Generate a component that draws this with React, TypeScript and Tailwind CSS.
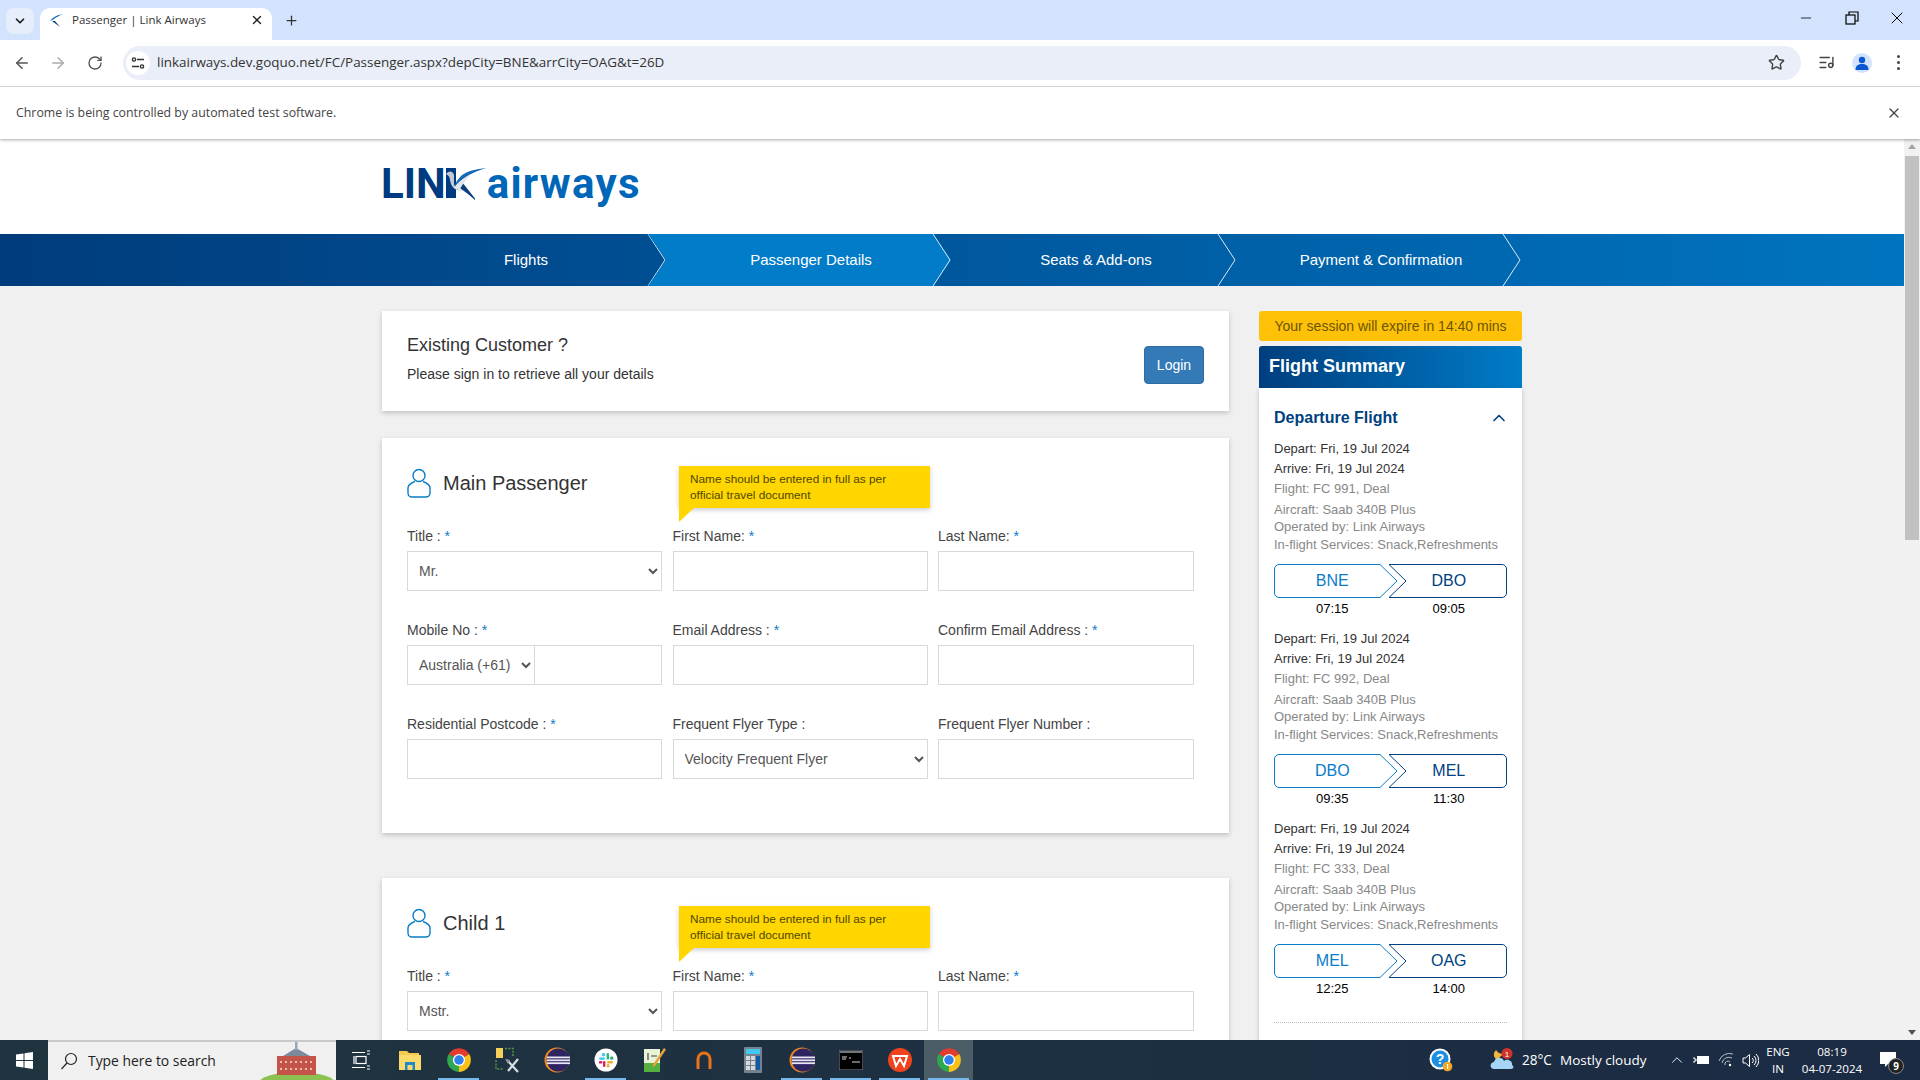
import { ArrowLeft, ArrowRight, ChevronDown, ChevronUp, ListMusic, Minus, Plus, RotateCw, Star, X } from "lucide-react";

const segments = [
  { flight: "FC 991", from: "BNE", to: "DBO", dep: "07:15", arr: "09:05" },
  { flight: "FC 992", from: "DBO", to: "MEL", dep: "09:35", arr: "11:30" },
  { flight: "FC 333", from: "MEL", to: "OAG", dep: "12:25", arr: "14:00" },
];

const steps = ["Flights", "Passenger Details", "Seats & Add-ons", "Payment & Confirmation"];

function Bird({ className }: { className?: string }) {
  return (
    <svg viewBox="0 0 41 33" className={className}>
      <rect x="0" y="1" width="10" height="30" fill="#003a80" />
      <path d="M29 31.5 L16 15 L11 19 L22 27 L29 33Z" fill="#0d3f7c" />
      <path d="M40.5 1 C30 2 21 4 15 9 C11 13 9 17 8 21 C14 13 25 5 40.5 1Z" fill="#1368b5" />
      <path d="M0 7 C3 3 7 4 8 8 L8 17 C9 21 13 23 17 23 C11 25 5 21 4 13 C4 10 2 8 0 7Z" fill="#c3cad4" />
      <path d="M8 21 C13 14 18 11 25 7 C20 13 16 18 14 22Z" fill="#e3e7ec" />
    </svg>
  );
}

function ChromeLogo({ size = 24 }: { size?: number }) {
  return (
    <svg width={size} height={size} viewBox="0 0 24 24">
      <path d="M12 12 L2.5 6.5 A11 11 0 0 1 21.5 6.5Z" fill="#e33b2e" />
      <path d="M12 12 L21.5 6.5 A11 11 0 0 1 12 23Z" fill="#fbc116" />
      <path d="M12 12 L12 23 A11 11 0 0 1 2.5 6.5Z" fill="#2fa84f" />
      <circle cx="12" cy="12" r="5.6" fill="#fff" />
      <circle cx="12" cy="12" r="4.4" fill="#2f80ed" />
    </svg>
  );
}

function EclipseLogo() {
  return (
    <svg width="26" height="26" viewBox="0 0 26 26">
      <circle cx="13" cy="13" r="12.5" fill="#f28c1e" />
      <circle cx="14.2" cy="13" r="11.5" fill="#2f2462" />
      <rect x="3" y="9.5" width="23" height="1.8" fill="#e8e6f2" />
      <rect x="3" y="12.4" width="23" height="1.8" fill="#e8e6f2" />
      <rect x="3" y="15.3" width="23" height="1.8" fill="#e8e6f2" />
    </svg>
  );
}

const taskIcons = [
  {
    key: "taskview",
    node: (
      <svg width="18" height="20" viewBox="0 0 18 20" fill="none" stroke="#fff" strokeWidth="1.2">
        <path d="M0 2.5 H13 M15 1 H18 M15 4 H18" />
        <rect x="4" y="6.5" width="10" height="7" />
        <path d="M0 17.5 H13 M15 16 H18 M15 19 H18 M2 6 V14" />
      </svg>
    ),
  },
  {
    key: "folder",
    node: (
      <svg width="24" height="24" viewBox="0 0 24 24">
        <path d="M1 3 H9 L11 5 H21 V22 H1Z" fill="#f5c94e" />
        <rect x="1" y="7" width="22" height="15" fill="#fbd96b" />
        <path d="M7 22 V14 H17 V22 H14.5 V17 H9.5 V22Z" fill="#1e88c9" />
      </svg>
    ),
  },
  { key: "chrome1", bar: true, node: <ChromeLogo size={26} /> },
  {
    key: "tools",
    node: (
      <svg width="26" height="26" viewBox="0 0 26 26" fill="none">
        <rect x="1" y="1" width="7" height="10" fill="#f5cf5a" />
        <path d="M10 1.5 H18 V10 M1 13 V22 H8" stroke="#5a9a3a" strokeWidth="1.4" strokeDasharray="2 1.4" />
        <path d="M12 13 L23 25 M23 12 L13 24" stroke="#d9dde0" strokeWidth="2.2" />
        <path d="M10 12 L15 13 L13 17Z" fill="#8a939a" />
      </svg>
    ),
  },
  { key: "eclipse1", node: <EclipseLogo /> },
  {
    key: "slack",
    bar: true,
    node: (
      <svg width="24" height="24" viewBox="0 0 24 24">
        <circle cx="12" cy="12" r="11.5" fill="#fff" />
        <rect x="8" y="5" width="3" height="3.4" rx="1.4" fill="#36c5f0" />
        <rect x="5" y="9.4" width="6" height="2.4" rx="1.2" fill="#36c5f0" />
        <rect x="12.6" y="5" width="2.4" height="6.6" rx="1.2" fill="#2eb67d" />
        <rect x="16" y="8.6" width="3.4" height="3.2" rx="1.4" fill="#2eb67d" />
        <rect x="13" y="13" width="6" height="2.4" rx="1.2" fill="#ecb22e" />
        <rect x="12.8" y="16" width="2.6" height="3.4" rx="1.2" fill="#ecb22e" />
        <rect x="9" y="13" width="2.4" height="6" rx="1.2" fill="#e01e5a" />
        <rect x="5" y="13" width="3.4" height="2.6" rx="1.2" fill="#e01e5a" />
      </svg>
    ),
  },
  {
    key: "notepad",
    node: (
      <svg width="24" height="26" viewBox="0 0 24 26">
        <path d="M1 2 H17 V25 H1Z" fill="#e8f3d8" />
        <path d="M1 16 H17 V25 H1Z" fill="#55b13f" />
        <path d="M5 6 V13 M8 9 H14" stroke="#444" strokeWidth="1.2" />
        <path d="M21 1 L23 2.5 L12 19 L9.5 20 L10 17.5Z" fill="#e9a13a" />
      </svg>
    ),
  },
  {
    key: "arch",
    node: (
      <svg width="18" height="20" viewBox="0 0 18 20" fill="none">
        <path d="M3 19 V9 A6 6 0 0 1 15 9 V19" stroke="#e8731a" strokeWidth="3" />
      </svg>
    ),
  },
  {
    key: "calc",
    node: (
      <svg width="18" height="26" viewBox="0 0 18 26">
        <rect width="18" height="26" rx="1" fill="#76828c" />
        <rect x="2" y="2" width="14" height="5" fill="#43c6ef" />
        {[9, 14, 19].map((y) => [2, 7].map((x) => <rect key={`${x}-${y}`} x={x} y={y} width="4" height="4" fill="#d6dade" />))}
        <rect x="12" y="9" width="4" height="14" fill="#0f5ba7" />
      </svg>
    ),
  },
  { key: "eclipse2", bar: true, node: <EclipseLogo /> },
  {
    key: "cmd",
    bar: true,
    node: (
      <svg width="24" height="20" viewBox="0 0 24 20">
        <rect width="24" height="20" fill="#000" stroke="#8a8f94" />
        <rect x="1" y="1" width="22" height="2" fill="#6f767c" />
        <path d="M3 7 H8 M3 9 H7 M10 8 H12 M13 12 H21" stroke="#d5d5d5" strokeWidth="1.2" />
      </svg>
    ),
  },
  {
    key: "wps",
    bar: true,
    node: (
      <svg width="24" height="24" viewBox="0 0 24 24" fill="none">
        <circle cx="12" cy="12" r="12" fill="#f0431c" />
        <path d="M5 8 H19 L16 18 L12 11 L8 18Z" stroke="#fff" strokeWidth="2" />
      </svg>
    ),
  },
  { key: "chrome2", bar: true, active: true, node: <ChromeLogo size={26} /> },
];

function PersonIcon() {
  return (
    <svg width="24" height="30" viewBox="0 0 24 30" fill="none" stroke="#0a7cc9" strokeWidth="1.4">
      <circle cx="12" cy="7.5" r="6" />
      <path d="M8 13.500 C4 15 1 17 1 20 V25 C1 27.500 3 29 5 29 H19 C21 29 23 27.500 23 25 V20 C23 17 20 15 16 13.500" />
    </svg>
  );
}

function Label({ text, required = true }: { text: string; required?: boolean }) {
  return (
    <div className="mb-[5px] h-5 text-[14px] leading-5 text-[#444]">
      {text}
      {required && <span className="text-[#0a7cc9]"> *</span>}
    </div>
  );
}

const boxClass = "h-[40px] border border-[#d9d9d9] bg-white text-[14px] text-[#555] outline-none";

function TextField({ label, required }: { label: string; required?: boolean }) {
  return (
    <div className="mb-[29px]">
      <Label text={label} required={required} />
      <input className={`${boxClass} w-full`} />
    </div>
  );
}

function SelectField({ label, value, required }: { label: string; value: string; required?: boolean }) {
  return (
    <div className="mb-[29px]">
      <Label text={label} required={required} />
      <select className={`${boxClass} w-full pl-[7px]`} defaultValue={value}>
        <option>{value}</option>
      </select>
    </div>
  );
}

function PassengerHead({ title }: { title: string }) {
  return (
    <div className="relative flex h-[58px] items-start gap-[12px]">
      <PersonIcon />
      <div className="text-[20px] leading-[30px] text-[#333]">{title}</div>
      <div className="absolute left-[272px] top-[-2px] w-[251px] bg-[#ffd600] px-[11px] py-[5px] text-[11.8px] leading-4 text-[#4f4700] shadow-[0_2px_5px_rgba(0,0,0,0.2)]">
        Name should be entered in full as per
        <br />
        official travel document
        <span className="absolute left-0 top-full h-[14px] w-[15px] bg-[#ffd600] [clip-path:polygon(0_0,100%_0,0_100%)]" />
      </div>
    </div>
  );
}

function Route({ from, to, dep, arr }: { from: string; to: string; dep: string; arr: string }) {
  return (
    <div className="mt-[10px]">
      <div className="relative grid h-[34px] grid-cols-2 text-center text-[16px] leading-[34px]">
        <svg className="absolute inset-0" width="233" height="34" viewBox="0 0 233 34" fill="none">
          <path d="M5 .5 H106 L123 17 L106 33.5 H5 A4.5 4.5 0 0 1 .5 29 V5 A4.5 4.5 0 0 1 5 .5Z" stroke="#0a7cc9" />
          <path d="M115 .5 H228 A4.5 4.5 0 0 1 232.5 5 V29 A4.5 4.5 0 0 1 228 33.5 H115 L132 17Z" stroke="#00417f" />
        </svg>
        <div className="text-[#0a7cc9]">{from}</div>
        <div className="text-[#00417f]">{to}</div>
      </div>
      <div className="grid grid-cols-2 pt-[1px] text-center text-[13px] leading-5 text-black">
        <div>{dep}</div>
        <div>{arr}</div>
      </div>
    </div>
  );
}

export default function App() {
  return (
    <div className="flex h-[1080px] w-[1920px] flex-col overflow-hidden bg-white font-['Liberation_Sans',Arial,sans-serif]">
      {/* browser tabs */}
      <div className="flex h-[40px] items-end bg-[#d3e3fd] font-['Open_Sans',sans-serif]">
        <div className="mb-[6px] ml-[6px] flex h-[26px] w-[28px] items-center justify-center rounded-[8px] bg-[#e6eefc]">
          <ChevronDown size={14} strokeWidth={3} className="text-[#1f1f1f]" />
        </div>
        <div className="ml-[6px] flex h-[32px] w-[232px] items-center rounded-t-[10px] bg-white pb-[8px] pl-[9px] pr-[8px]">
          <svg width="15" height="15" viewBox="0 0 15 15">
            <path d="M14 1 C8 2 3 5 1 8 C4 7 7 4 14 1Z" fill="#1368b5" />
            <path d="M3 8 L11 14 L6 8Z" fill="#0d3f7c" />
          </svg>
          <span className="ml-[8px] flex-1 text-[11.5px] text-[#333]">Passenger | Link Airways</span>
          <X size={14} strokeWidth={2.4} className="text-[#222]" />
        </div>
        <Plus size={15} strokeWidth={2} className="mb-[12px] ml-[12px] text-[#333]" />
        <div className="mb-[12px] ml-auto flex items-center text-black">
          <Minus size={16} strokeWidth={1.2} className="mr-[30px]" />
          <svg width="16" height="16" viewBox="0 0 16 16" fill="none" stroke="#000" strokeWidth="1.2" className="mr-[27px]">
            <rect x="2" y="5" width="9" height="9" />
            <path d="M5 5 V2 H14 V11 H11" />
          </svg>
          <X size={20} strokeWidth={1.2} className="mr-[13px]" />
        </div>
      </div>
      {/* toolbar */}
      <div className="flex h-[47px] items-center border-b border-[#e0e0e0] bg-white pb-[1px] font-['Open_Sans',sans-serif]">
        <ArrowLeft size={18} className="ml-[13px] text-[#555]" />
        <ArrowRight size={18} className="ml-[18px] text-[#aaa]" />
        <RotateCw size={16} className="ml-[20px] text-[#555]" />
        <div className="ml-[20px] flex h-[34px] w-[1678px] items-center rounded-full bg-[#e9eef8] pl-[3px] pr-[16px]">
          <div className="flex h-[24px] w-[24px] items-center justify-center rounded-full bg-white">
            <svg width="14" height="14" viewBox="0 0 14 14" fill="none" stroke="#333" strokeWidth="1.4">
              <path d="M6 3.5 H13 M1 10.5 H8" />
              <circle cx="3" cy="3.5" r="1.6" />
              <circle cx="11" cy="10.5" r="1.6" />
            </svg>
          </div>
          <span className="ml-[7px] flex-1 text-[13.43px] text-[#333]">linkairways.dev.goquo.net/FC/Passenger.aspx?depCity=BNE&amp;arrCity=OAG&amp;t=26D</span>
          <Star size={17} strokeWidth={2} className="text-[#444]" />
        </div>
        <ListMusic size={17} strokeWidth={2} className="ml-[17px] text-[#444]" />
        <div className="ml-[17px] flex h-[20px] w-[20px] items-center justify-center overflow-hidden rounded-full bg-[#d3e3fd]">
          <svg width="14" height="14" viewBox="0 0 14 14" fill="#0b57d0">
            <circle cx="7" cy="4" r="3.2" />
            <path d="M0.5 14 C0.5 9.5 3.5 8 7 8 C10.5 8 13.5 9.5 13.5 14Z" />
          </svg>
        </div>
        <div className="ml-[25px] flex flex-col gap-[3px]">
          <span className="h-[3px] w-[3px] rounded-full bg-[#444]" />
          <span className="h-[3px] w-[3px] rounded-full bg-[#444]" />
          <span className="h-[3px] w-[3px] rounded-full bg-[#444]" />
        </div>
      </div>
      {/* automation infobar */}
      <div className="z-10 flex h-[52px] items-center justify-between bg-white pl-[16px] pr-[18px] font-['Open_Sans',sans-serif] text-[12.35px] text-[#444] shadow-[0_1px_3px_rgba(0,0,0,0.35)]">
        <span>Chrome is being controlled by automated test software.</span>
        <X size={16} strokeWidth={1.8} className="text-[#444]" />
      </div>

      {/* page viewport */}
      <div className="flex h-[901px]">
        <div className="w-[1904px] overflow-hidden bg-[#f0f0f0]">
          <div className="h-[95px] bg-white pl-[381px] pt-[24px]">
            <div className="flex items-baseline font-['Roboto',sans-serif] font-bold leading-[42px]">
              <span className="text-[42px] text-[#003a80]">LIN</span>
              <Bird className="mt-[4px] h-[33px] w-[41px] self-start" />
              <span className="text-[42px] tracking-[1.3px] text-[#0066b8]">airways</span>
            </div>
          </div>
          <div className="flex h-[52px] bg-gradient-to-r from-[#003c7c] to-[#0074c0] pl-[381px] text-[15px] text-white">
            {steps.map((step, i) => (
              <div key={step} className="relative flex h-full w-[285px] items-center justify-center pl-[5px]">
                {i === 1 && (
                  <div className="absolute left-[-18px] top-0 h-full w-[303px] bg-[#007cc8] [clip-path:polygon(0_0,285px_0,303px_50%,285px_100%,0_100%,18px_50%)]" />
                )}
                <svg className="absolute right-[-1px] top-0" width="20" height="52" viewBox="0 0 20 52" fill="none" stroke="#dbe8f3" strokeWidth="1">
                  <path d="M1 0 L18 26 L1 52" />
                </svg>
                <span className="relative">{step}</span>
              </div>
            ))}
          </div>

          <div className="flex gap-[30px] pl-[382px] pt-[25px]">
            <div className="w-[847px]">
              <div className="flex h-[100px] items-center justify-between bg-white px-[25px] shadow-[0_2px_5px_rgba(0,0,0,0.2)]">
                <div className="mb-[6px]">
                  <div className="text-[18px] leading-[26px] text-[#333]">Existing Customer ?</div>
                  <div className="mt-[6px] text-[14px] leading-5 text-[#333]">Please sign in to retrieve all your details</div>
                </div>
                <button className="mt-[8px] h-[38px] w-[60px] rounded-[4px] border border-[#2e6da4] bg-[#337ab7] text-[14px] text-white">Login</button>
              </div>

              <div className="mt-[27px] h-[395px] bg-white pl-[25px] pt-[30px] shadow-[0_2px_5px_rgba(0,0,0,0.2)]">
                <PassengerHead title="Main Passenger" />
                <div className="grid grid-cols-[255px_255px_256px] gap-x-[10.5px]">
                  <SelectField label="Title :" value="Mr." />
                  <TextField label="First Name:" />
                  <TextField label="Last Name:" />
                  <div className="mb-[29px]">
                    <Label text="Mobile No :" />
                    <div className="flex">
                      <select className={`${boxClass} w-[128px] shrink-0 pl-[7px]`} defaultValue="Australia (+61)">
                        <option>Australia (+61)</option>
                      </select>
                      <input className={`${boxClass} w-[127px] border-l-0`} />
                    </div>
                  </div>
                  <TextField label="Email Address :" />
                  <TextField label="Confirm Email Address :" />
                  <TextField label="Residential Postcode :" />
                  <SelectField label="Frequent Flyer Type :" value="Velocity Frequent Flyer" required={false} />
                  <TextField label="Frequent Flyer Number :" required={false} />
                </div>
              </div>

              <div className="mt-[45px] h-[395px] bg-white pl-[25px] pt-[30px] shadow-[0_2px_5px_rgba(0,0,0,0.2)]">
                <PassengerHead title="Child 1" />
                <div className="grid grid-cols-[255px_255px_256px] gap-x-[10.5px]">
                  <SelectField label="Title :" value="Mstr." />
                  <TextField label="First Name:" />
                  <TextField label="Last Name:" />
                </div>
              </div>
            </div>

            <div className="w-[263px]">
              <div className="h-[30px] rounded-[3px] bg-[#ffc107] text-center text-[14px] leading-[30px] text-[#6a5500]">
                Your session will expire in 14:40 mins
              </div>
              <div className="mt-[5px] h-[42px] rounded-t-[3px] bg-gradient-to-r from-[#003f7f] to-[#007cc8] pl-[10px] text-[18px] font-bold leading-[40px] text-white">
                Flight Summary
              </div>
              <div className="h-[700px] bg-white px-[15px] pt-[16px] shadow-[0_2px_5px_rgba(0,0,0,0.2)]">
                <div className="mb-[7px] flex h-[28px] items-center justify-between text-[16px] font-bold text-[#00417f]">
                  Departure Flight
                  <ChevronUp size={20} strokeWidth={2} className="mr-[-2px]" />
                </div>
                {segments.map((s) => (
                  <div key={s.flight} className="h-[190px]">
                    <div className="text-[13px] leading-5 text-[#333]">Depart: Fri, 19 Jul 2024</div>
                    <div className="text-[13px] leading-5 text-[#333]">Arrive: Fri, 19 Jul 2024</div>
                    <div className="text-[13px] leading-5 text-[#888]">Flight: {s.flight}, Deal</div>
                    <div className="mt-[2px] text-[13px] leading-[18px] text-[#888]">
                      <div>Aircraft: Saab 340B Plus</div>
                      <div className="mt-[-1px]">Operated by: Link Airways</div>
                      <div>In-flight Services: Snack,Refreshments</div>
                    </div>
                    <Route from={s.from} to={s.to} dep={s.dep} arr={s.arr} />
                  </div>
                ))}
                <div className="mt-[13px] border-t border-dotted border-[#bbb]" />
              </div>
            </div>
          </div>
        </div>

        {/* page scrollbar */}
        <div className="flex w-[16px] flex-col items-center bg-[#f1f1f1]">
          <div className="mt-[5px] h-0 w-0 border-x-[4px] border-b-[5px] border-x-transparent border-b-[#a3a3a3]" />
          <div className="mt-[7px] h-[384px] w-[14px] bg-[#c1c1c1]" />
          <div className="mb-[5px] mt-auto h-0 w-0 border-x-[4px] border-t-[5px] border-x-transparent border-t-[#505050]" />
        </div>
      </div>

      {/* windows taskbar */}
      <div className="flex h-[40px] items-center bg-gradient-to-r from-[#20343f] to-[#1b2b44] font-['Open_Sans',sans-serif] text-white">
        <div className="flex h-full w-[48px] items-center justify-center">
          <svg width="17" height="17" viewBox="0 0 17 17" fill="#fff">
            <path d="M0 2.5 L7.5 1.4 V8 H0Z M8.5 1.3 L17 0 V8 H8.5Z M0 9 H7.5 V15.6 L0 14.5Z M8.5 9 H17 V17 L8.5 15.7Z" />
          </svg>
        </div>
        <div className="flex h-full w-[288px] items-center overflow-hidden border-t-2 border-[#c9c9c9] bg-[#f0f0f0] pl-[12px] text-[#222]">
          <svg width="18" height="18" viewBox="0 0 18 18" fill="none" stroke="#222" strokeWidth="1.2">
            <circle cx="11" cy="7" r="5.5" />
            <path d="M7 11 L1.5 17" />
          </svg>
          <span className="ml-[10px] flex-1 text-[13.9px]">Type here to search</span>
          <svg width="78" height="38" viewBox="0 0 78 38" className="self-end">
            <ellipse cx="39" cy="42" rx="39" ry="12" fill="#8cc152" />
            <path d="M19 14 H58 V33 H19Z" fill="#c4534a" />
            <path d="M25 14 L38 6 L52 14Z" fill="#7c8a9c" />
            <rect x="37" y="0" width="2.5" height="8" fill="#9aa7b8" />
            <path d="M22 20 H55 M22 27 H55" stroke="#eebcb0" strokeWidth="2" strokeDasharray="2 3" />
          </svg>
        </div>
        {taskIcons.map((icon) => (
          <div
            key={icon.key}
            className={`relative flex h-full w-[49px] items-center justify-center ${icon.active ? "bg-[#4b5e68]" : ""}`}
          >
            {icon.node}
            {icon.bar && <span className="absolute bottom-0 left-[4px] right-[4px] h-[2px] bg-[#76b9ed]" />}
          </div>
        ))}
        <div className="ml-auto flex h-full items-center">
          <div className="flex w-[40px] justify-center">
            <svg width="24" height="24" viewBox="0 0 24 24">
              <circle cx="11" cy="11" r="10.5" fill="#fff" />
              <circle cx="11" cy="11" r="8.5" fill="#1d8fe0" />
              <text x="11" y="16" textAnchor="middle" fontSize="14" fontWeight="700" fill="#fff" fontFamily="Liberation Sans">?</text>
              <circle cx="18.5" cy="18.5" r="4.8" fill="#f5a623" />
              <rect x="18" y="16" width="1.2" height="5" fill="#fff" />
            </svg>
          </div>
          <div className="ml-[21px] flex w-[40px] justify-center">
            <svg width="26" height="24" viewBox="0 0 26 24">
              <path d="M7 2 C4 5 4 9 8 12 L14 6 C12 6 9 5 7 2Z" fill="#f5b73b" />
              <path d="M5 21 C1 21 0 15 5 14 C6 9 13 8 15 13 C18 10 24 13 23 17 C25 18 25 21 22 21Z" fill="#a6d4f5" />
              <circle cx="18" cy="5.5" r="5.5" fill="#d1332b" />
              <text x="18" y="8.5" textAnchor="middle" fontSize="8" fill="#fff" fontFamily="Liberation Sans">1</text>
            </svg>
          </div>
          <span className="w-[38px] text-[13.6px]">28°C</span>
          <span className="w-[86px] whitespace-nowrap text-[13.5px]">Mostly cloudy</span>
          <div className="ml-[19px] flex w-[24px] justify-center">
            <ChevronUp size={18} strokeWidth={1.2} />
          </div>
          <div className="flex w-[24px] justify-center">
            <svg width="16" height="12" viewBox="0 0 16 12" fill="none" stroke="#fff">
              <rect x="4.5" y="2.5" width="11" height="7" fill="#fff" />
              <path d="M0 4 H2 V8 H0 M2 6 H4" />
            </svg>
          </div>
          <div className="flex w-[25px] justify-center">
            <svg width="16" height="14" viewBox="0 0 16 14" fill="none" stroke="#b8c0c7">
              <path d="M1 8 A11 11 0 0 1 15 1 M4 10 A7 7 0 0 1 14 5 M7 12 A3 3 0 0 1 12 9" />
              <circle cx="12" cy="12" r="1.2" fill="#fff" stroke="none" />
            </svg>
          </div>
          <div className="flex w-[24px] justify-center">
            <svg width="17" height="15" viewBox="0 0 17 15" fill="none" stroke="#fff">
              <path d="M1 5 H3.5 L7.5 1.5 V13.5 L3.5 10 H1Z M10 5 A3 3 0 0 1 10 10 M12 3 A6 6 0 0 1 12 12 M14 1 A9 9 0 0 1 14 14" />
            </svg>
          </div>
          <div className="w-[32px] text-center text-[11.6px] leading-[17px]">
            ENG
            <br />
            IN
          </div>
          <div className="w-[76px] text-center text-[11.6px] leading-[17px]">
            08:19
            <br />
            04-07-2024
          </div>
          <div className="relative flex w-[36px] justify-center">
            <svg width="18" height="16" viewBox="0 0 18 16" fill="#fff">
              <path d="M1 0 H17 V12 H9 L6 15 V12 H1Z" />
            </svg>
            <span className="absolute left-[18px] top-[6px] flex h-[16px] w-[16px] items-center justify-center rounded-full border border-[#888] bg-[#222] text-[10px] font-bold">9</span>
          </div>
          <div className="w-[14px]" />
        </div>
      </div>
    </div>
  );
}
